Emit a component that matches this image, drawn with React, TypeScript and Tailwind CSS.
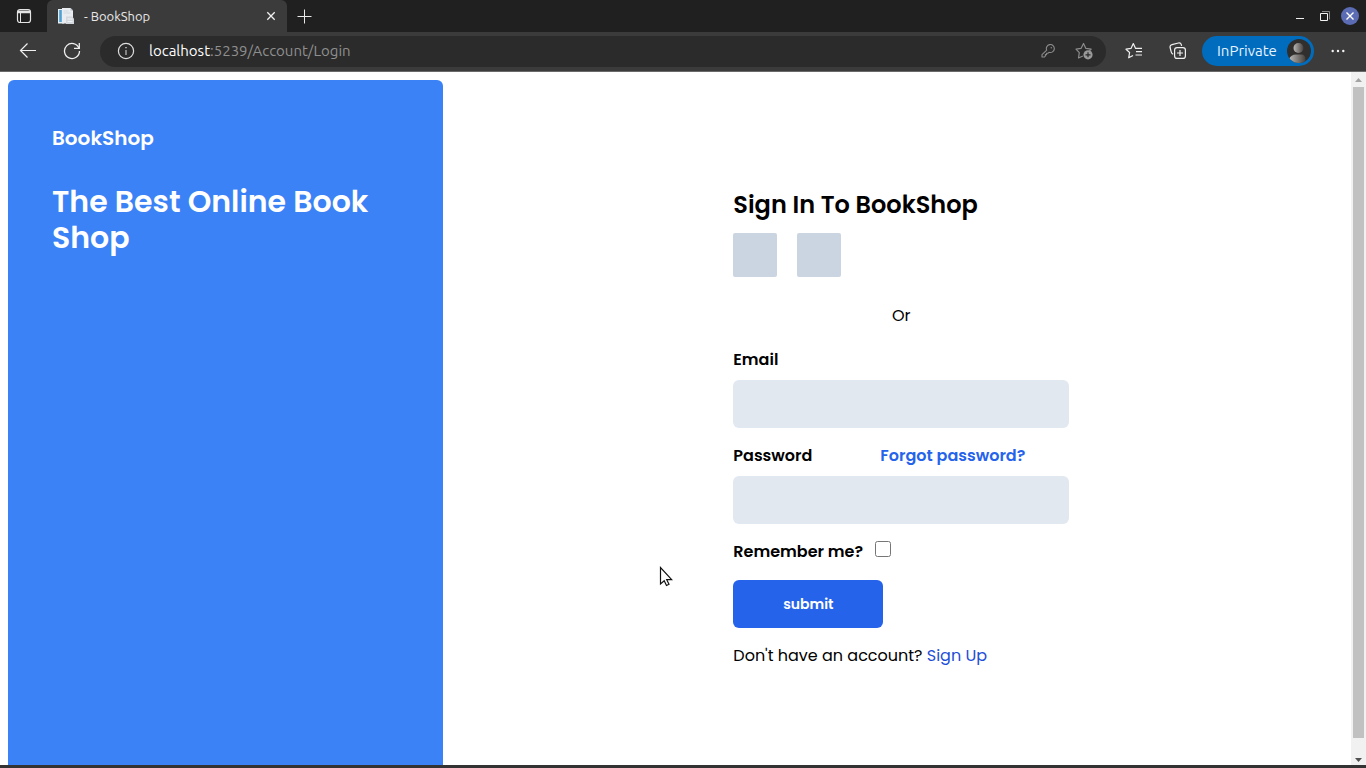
import React from "react";

const chromeFont = "font-['Ubuntu','Noto_Sans',sans-serif]";
const pageFont = "font-['Poppins','Inter',sans-serif]";

function TabBar() {
  return (
    <header className="flex h-8 shrink-0 items-stretch bg-[#202020] text-[#e8e8e8]">
      <button aria-label="Tab actions" className="flex w-[47px] items-center justify-center">
        <svg width="16" height="16" viewBox="0 0 16 16" fill="none" stroke="#e4e4e4">
          <rect x="1.5" y="1.5" width="13" height="13" rx="2.5" strokeWidth="1.2" />
          <path d="M1.8 3.2h12.4M1.8 4.5h12.4" strokeWidth="1.6" />
          <path d="M4.5 5v9.5" />
        </svg>
      </button>
      <div className="flex w-60 items-center rounded-t-md bg-[#3b3b3b] px-2">
        <svg width="20" height="20" viewBox="0 0 20 20" className="shrink-0">
          <path d="M3 3h6v14.500H3z" fill="#e4eef5" />
          <path d="M4.200 4h2.600v12H4.200z" fill="#4f9fd2" />
          <path d="M7 2h8.500l2.500 2.500v13H7z" fill="#e9edf1" />
          <path d="M15.500 2v2.500H18z" fill="#b4c0ca" />
          <path d="M8.500 5h5M8.500 7h7" stroke="#d0d9e0" />
          <path d="M11 10.500h6l2 2V18h-8z" fill="#d3d8de" />
          <path d="M12.500 13h5M12.500 15.500h5" stroke="#f1f3f5" />
        </svg>
        <span className="ml-[9px] flex-1 text-[13px] leading-4 whitespace-nowrap">- BookShop</span>
        <button aria-label="Close tab" className="flex size-4 items-center justify-center">
          <svg width="10" height="10" viewBox="0 0 10 10" stroke="#f0f0f0" strokeWidth="1.3">
            <path d="M1.300 1.300l7.400 7.400M8.700 1.300L1.300 8.700" />
          </svg>
        </button>
      </div>
      <button aria-label="New tab" className="flex w-[35px] items-center justify-center">
        <svg width="15" height="15" viewBox="0 0 15 15" stroke="#e8e8e8">
          <path d="M7.500 0.500v14M0.500 7.500h14" />
        </svg>
      </button>
      <div className="ml-auto flex items-center gap-1.5 pr-[7px]">
        <button aria-label="Minimize" className="flex size-4 items-center justify-center">
          <svg width="10" height="10" viewBox="0 0 10 10" stroke="#f0f0f0">
            <path d="M0 7.500h8" />
          </svg>
        </button>
        <button aria-label="Restore" className="flex size-5 items-center justify-center">
          <svg width="12" height="12" viewBox="0 0 12 12" fill="none">
            <path d="M3 1.500h7.500v8" stroke="#8a8a8a" />
            <path d="M1.500 3.500h7v7h-7z" stroke="#f4f4f4" />
          </svg>
        </button>
        <button aria-label="Close window" className="flex size-[18px] items-center justify-center rounded-full bg-[#5b6cb4]">
          <svg width="10" height="10" viewBox="0 0 10 10" stroke="#fff" strokeWidth="1.400">
            <path d="M1.500 1.500l7 7M8.500 1.500l-7 7" />
          </svg>
        </button>
      </div>
    </header>
  );
}

function Toolbar() {
  return (
    <nav className="flex h-10 shrink-0 items-center border-b border-[#6a6a6a] bg-[#3b3b3b] pb-px">
      <button aria-label="Back" className="ml-4 flex size-6 items-center justify-center">
        <svg width="18" height="18" viewBox="0 0 18 18" fill="none" stroke="#f0f0f0" strokeWidth="1.200">
          <path d="M17 8.500H1.500M8.500 1.500l-7 7 7 7" />
        </svg>
      </button>
      <button aria-label="Refresh" className="ml-5 flex size-6 items-center justify-center">
        <svg width="18" height="18" viewBox="0 0 18 18" fill="none" stroke="#f0f0f0" strokeWidth="1.300">
          <path d="M16 6.300A7.500 7.500 0 1 0 16.500 9" />
          <path d="M16.300 1v5.300H11" />
        </svg>
      </button>
      <div className="ml-4 flex h-[31px] flex-1 items-center rounded-full bg-[#2b2b2b] pl-4">
        <svg width="18" height="18" viewBox="0 0 18 18" fill="none" stroke="#dedede" className="ml-px shrink-0">
          <circle cx="9" cy="9" r="7.600" strokeWidth="1.200" />
          <path d="M9 8v5" />
          <path d="M9 5v1.300" strokeWidth="1.300" />
        </svg>
        <span className="ml-3.5 flex-1 text-[15px] leading-5 text-[#8f8f8f]">
          <span className="text-white">localhost</span>:5239/Account/Login
        </span>
        <button aria-label="Saved passwords" className="flex size-6 items-center justify-center">
          <svg width="14" height="14" viewBox="0 0 14 14" fill="none" stroke="#8c8c8c" strokeWidth="1.100">
            <path d="M5.700 6.200A4 4 0 1 1 8 8.300L6.800 9.300H5.600v1.300H4.400v1.300L3.500 13H1v-2.300z" strokeLinejoin="round" />
            <circle cx="10.300" cy="3.700" r="0.700" fill="#8c8c8c" stroke="none" />
          </svg>
        </button>
        <button aria-label="Add to favorites" className="mr-2.5 ml-3 flex size-6 items-center justify-center">
          <svg width="18" height="18" viewBox="0 0 18 18" fill="none">
            <path d="M7.800 14L3.500 16l.8-5.300L1 7.200l5-.8L8.500 1.500l2.400 4.900 5.200.8-1.700 1.600" stroke="#8c8c8c" strokeWidth="1.200" strokeLinejoin="round" />
            <circle cx="13" cy="12.800" r="4.600" fill="#9a9a9a" />
            <path d="M13 10.300v5M10.500 12.800h5" stroke="#2b2b2b" strokeWidth="1.200" />
          </svg>
        </button>
      </div>
      <button aria-label="Favorites" className="ml-4 flex size-6 items-center justify-center">
        <svg width="18" height="18" viewBox="0 0 18 18" fill="none" stroke="#f0f0f0" strokeWidth="1.200">
          <path d="M8 13.400L3.700 15.800l.9-5.300L1 7.200l5-.8L8.300 1.500l2.300 4.900H17" strokeLinejoin="round" />
          <path d="M11 9.700h6M10.500 13h6.500" />
        </svg>
      </button>
      <button aria-label="Collections" className="ml-5 flex size-6 items-center justify-center">
        <svg width="18" height="18" viewBox="0 0 18 18" fill="none" stroke="#f0f0f0" strokeWidth="1.200">
          <path d="M4.200 12.200C2.900 11.700 2.500 11 2.200 9.800L1.100 5.500C.8 4 1.500 3 3 2.600l6.400-1.600c1.500-.3 2.500.2 2.900 1.600l.3 1.300" />
          <rect x="5.600" y="5.600" width="10.800" height="10.800" rx="2.500" />
          <path d="M11 8v6M8 11h6" />
        </svg>
      </button>
      <button className="ml-3 flex h-[30px] w-28 items-center justify-between rounded-full bg-[#006cbe] pr-[3px] pl-[15px] text-[15px] leading-5 text-[#e8f4ff]">
        InPrivate
        <svg width="24" height="24" viewBox="0 0 24 24">
          <defs>
            <linearGradient id="avatar">
              <stop offset="0" stopColor="#bab7b4" />
              <stop offset="1" stopColor="#45423f" />
            </linearGradient>
            <clipPath id="avatar-disc"><circle cx="12" cy="12" r="12" /></clipPath>
          </defs>
          <circle cx="12" cy="12" r="12" fill="#302f2e" />
          <g clipPath="url(#avatar-disc)" fill="url(#avatar)">
            <circle cx="11.500" cy="9" r="5" />
            <path d="M2 24v-4c1.500-3 3.500-4.500 7-4.500h5c3 0 4.500 2 4.500 4.500v4z" />
          </g>
        </svg>
      </button>
      <button aria-label="Settings and more" className="mr-4 ml-3 flex size-6 items-center justify-center">
        <svg width="14" height="4" viewBox="0 0 14 4" fill="#f4f4f4">
          <circle cx="1.700" cy="2" r="1.200" />
          <circle cx="7" cy="2" r="1.200" />
          <circle cx="12.300" cy="2" r="1.200" />
        </svg>
      </button>
    </nav>
  );
}

function Scrollbar() {
  return (
    <div aria-hidden="true" className="flex w-[15px] shrink-0 flex-col items-center bg-[#f1f1f1]">
      <svg width="15" height="15" viewBox="0 0 15 15"><path d="M4 10l3.500-4 3.500 4z" fill="#a3a3a3" /></svg>
      <div className="w-[11px] flex-1 bg-[#c1c1c1]" />
      <svg width="15" height="27" viewBox="0 0 15 27"><path d="M4 20l3.500 4 3.500-4z" fill="#505050" /></svg>
    </div>
  );
}

function LoginForm() {
  return (
    <form className="flex w-[336px] flex-col text-base leading-6" onSubmit={(e) => e.preventDefault()}>
      <h2 className="text-2xl leading-8 font-semibold whitespace-nowrap">Sign In To BookShop</h2>
      <div className="mt-3 flex gap-5">
        <button type="button" aria-label="First sign-in provider" className="size-11 rounded-xs bg-[#cbd5e1]" />
        <button type="button" aria-label="Second sign-in provider" className="size-11 rounded-xs bg-[#cbd5e1]" />
      </div>
      <p className="mt-[27px] text-center">Or</p>
      <label htmlFor="email" className="mt-5 font-semibold">Email</label>
      <input id="email" type="email" className="mt-2 h-12 rounded-md bg-[#e2e8f0] px-3 outline-none" />
      <div className="mt-4 flex justify-between pr-11 font-semibold">
        <label htmlFor="password">Password</label>
        <a href="#forgot" className="text-[#2563eb]">Forgot password?</a>
      </div>
      <input id="password" type="password" className="mt-2 h-12 rounded-md bg-[#e2e8f0] px-3 outline-none" />
      <div className="mt-4 flex gap-3 font-semibold">
        <label htmlFor="remember">Remember me?</label>
        <input id="remember" type="checkbox" className="mt-px size-4" />
      </div>
      <button type="submit" className="mt-4 h-12 w-[150px] rounded-md bg-[#2563eb] text-sm font-semibold text-white">
        submit
      </button>
      <p className="mt-4">
        Don't have an account? <a href="#signup" className="text-[#1d4ed8]">Sign Up</a>
      </p>
    </form>
  );
}

export default function App() {
  return (
    <div className={`relative flex h-screen flex-col overflow-hidden bg-white ${chromeFont}`}>
      <TabBar />
      <Toolbar />
      <div className="flex min-h-0 flex-1">
        <main className={`grid min-h-0 flex-1 grid-cols-3 gap-4 overflow-hidden pt-2 pr-[7px] pl-2 text-black ${pageFont}`}>
          <section className="rounded-t-md bg-[#3b82f6] p-11 font-semibold text-white">
            <h3 className="text-xl leading-7">BookShop</h3>
            <h1 className="mt-8 text-3xl leading-9">The Best Online Book Shop</h1>
          </section>
          <section className="col-span-2 flex justify-center pt-[109px]">
            <LoginForm />
          </section>
        </main>
        <Scrollbar />
      </div>
      <div className="h-[3px] shrink-0 bg-[#333333]" />
      <svg width="14" height="22" viewBox="0 0 14 22" className="pointer-events-none absolute top-[566px] left-[659px]">
        <path d="M1.500 1.500v16.500l3.700-3.300 2.300 4.800 2.500-1.200-2.300-4.600h5z" fill="#fff" stroke="#111" strokeWidth="1.200" />
      </svg>
    </div>
  );
}
